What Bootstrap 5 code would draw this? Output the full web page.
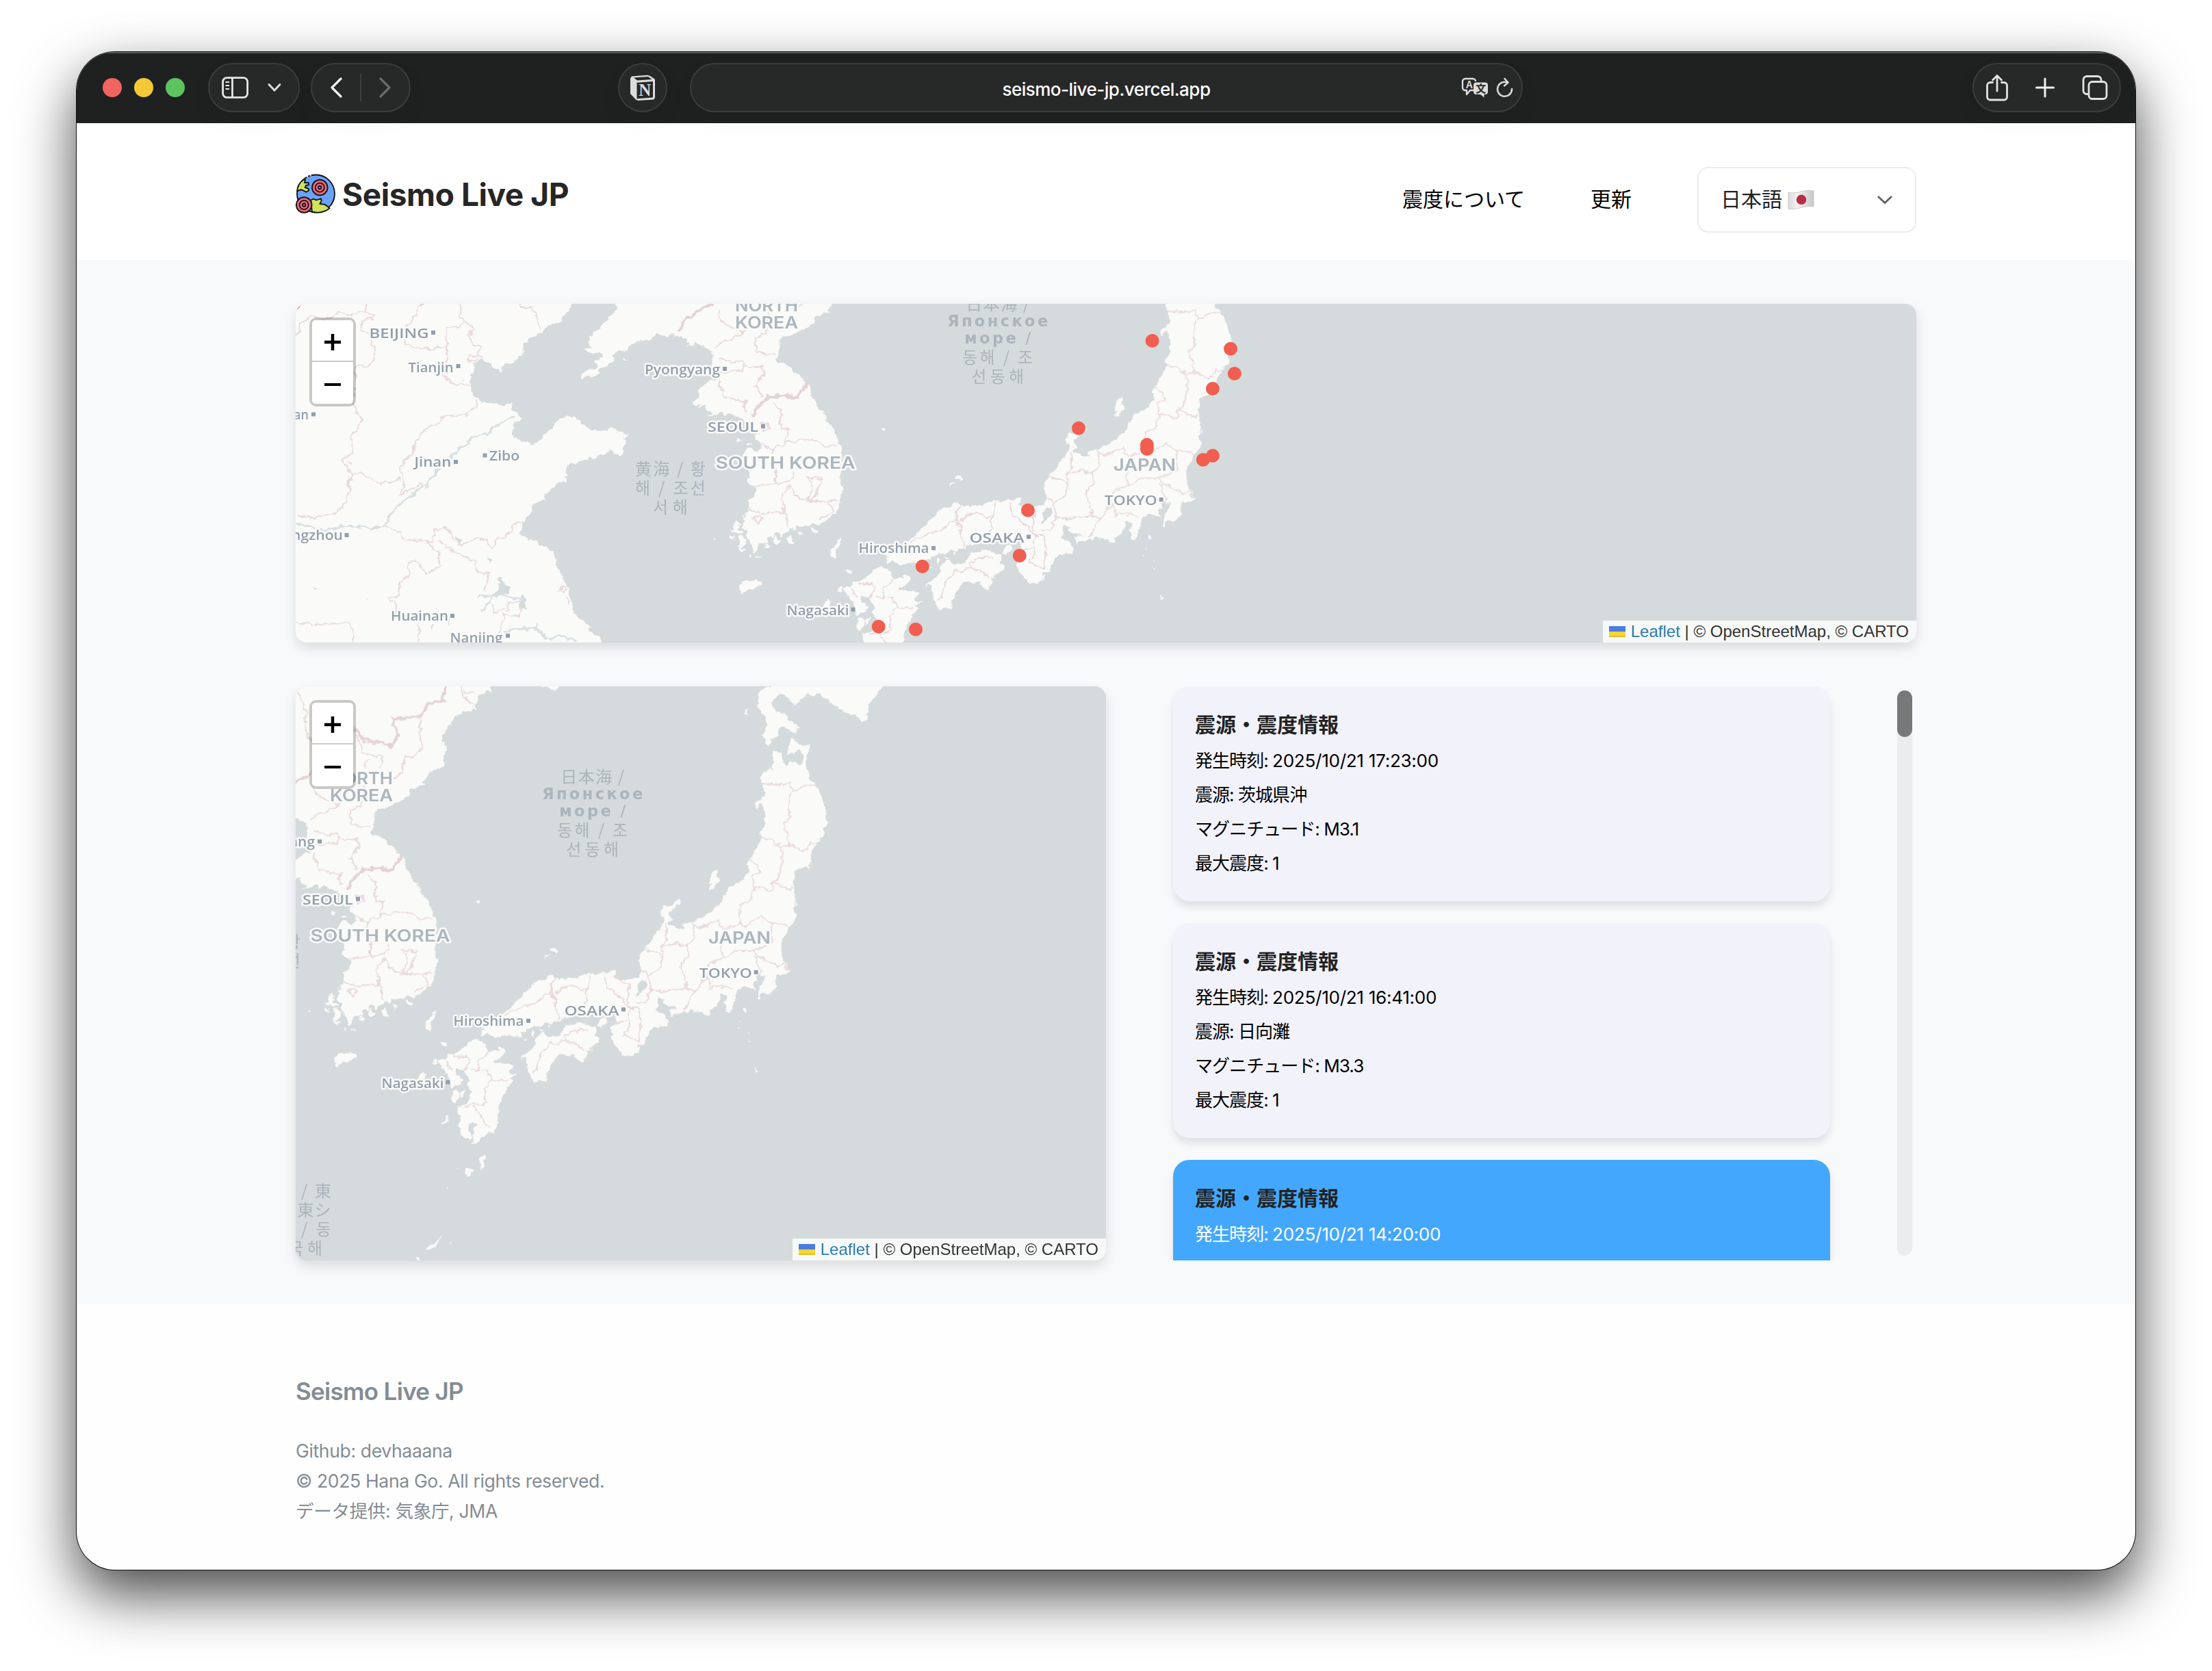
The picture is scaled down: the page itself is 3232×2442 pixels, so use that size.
<!DOCTYPE html>
<html lang="ja">
<head>
<meta charset="utf-8">
<meta name="viewport" content="width=device-width, initial-scale=1">
<title>Seismo Live JP</title>
<link href="https://cdn.jsdelivr.net/npm/bootstrap@5.3.0/dist/css/bootstrap.min.css" rel="stylesheet">
<style>
  body { background:#fff; font-family:Inter,"Noto Sans CJK JP",sans-serif; color:#000; width:3232px; height:2442px; overflow:hidden; padding:76px 112px 0; }
  .win { width:3008px; height:2218px; border-radius:56px; background:#fefefe; box-shadow:0 0 0 1px #111, 0 36px 84px rgba(0,0,0,.72); }
  .win-in { border-radius:56px; overflow:hidden; height:100%; }
  .toolbar { height:104px; background:#1f2120; padding:0 21px 0 38px; box-shadow:inset 0 2px 0 #5b5d5c; z-index:1; flex:none; }
  .lights { gap:18px; }
  .light { width:28px; height:28px; border-radius:50%; }
  .light.r { background:#f0655f; } .light.y { background:#f5c837; } .light.g { background:#5cc360; }
  .pill { height:72px; border-radius:36px; background:#272828; border:2px solid #3b3d3c; box-shadow:0 14px 40px rgba(0,0,0,.035); flex:none; }
  .pill svg, .flag svg, .brand svg { display:block; flex:none; }
  .pill-side { width:134px; margin-left:34px; padding-left:17px; }
  .pill-nav { width:146px; margin-left:16px; padding:0 26px; }
  .pill-ext { width:72px; margin-left:303px; }
  .pill-end { width:217px; padding:0 17px; }
  .addr { width:1217px; margin-left:33px; color:#fff; font-size:26px; font-weight:500; letter-spacing:-.52px; }
  .addr-icons { right:11px; gap:11px; }
  .wrapx { padding-left:320px; padding-right:320px; }
  .site-head { height:200px; background:#fff; }
  .brand { font-size:46px; font-weight:700; color:#262626; letter-spacing:-.42px; line-height:1; gap:9px; margin-bottom:-7px; }
  .menu { font-size:30px; line-height:1; gap:96px; margin-top:24px; }
  .menu > span, .lang > span:first-child { margin-top:-2px; }
  .lang { width:320px; height:96px; border:2px solid #e9ecef; border-radius:16px; padding:0 32px 0 32px; color:#222; }
  .main-area { background:#f8f9fb; height:1526px; padding-top:64px; }
  .mapbox { border-radius:16px; box-shadow:0 8px 18px rgba(0,0,0,.12); background:#d5dadc; }
  .mapbox > svg { display:block; border-radius:16px; }
  .map-wide { height:495px; margin-bottom:64px; }
  .map-half { width:1184px; height:839px; }
  .zoomer { position:absolute; left:20px; top:20px; width:68px; height:130px; border:4px solid rgba(0,0,0,.2); border-radius:10px; background-clip:padding-box; }
  .zoomer div { height:61px; background:#fff; padding-top:5px; }
  .zoomer div:first-child { border-bottom:2px solid #ccc; border-radius:5px 5px 0 0; }
  .zoomer div:last-child { border-radius:0 0 5px 5px; }
  .attrib { position:absolute; right:0; bottom:0; height:32px; padding:0 11px 0 9px; background:#f7f9f8; border-bottom-right-radius:16px; font-family:"Liberation Sans",sans-serif; font-size:24px; line-height:32px; color:#333; white-space:nowrap; }
  .attrib .lf { color:#2a7cb0; }
  .feed { width:1184px; height:839px; overflow:hidden; padding-left:98px; }
  .feed-list { gap:32px; }
  .quake { width:960px; height:314px; border-radius:24px; background:#f2f2fb; padding:31px 32px; box-shadow:0 8px 12px rgba(0,0,0,.1); flex:none; }
  .quake h2 { font-size:30px; font-weight:700; line-height:50px; margin:0 0 3px; color:#222; }
  .quake p { font-size:26px; line-height:50px; margin:0; letter-spacing:-.95px; }
  .quake time { letter-spacing:-.25px; }
  .quake.sel { background:#43a8fd; color:#fff; }
  .track { width:22px; height:826px; margin:6px 0 0 98px; border-radius:11px; background:#ebecee; }
  .thumb { height:68px; border-radius:11px; background:#767978; }
  .foot { color:#848c93; padding-top:105px; font-size:26.6px; line-height:44px; }
  .foot h3 { font-size:35px; font-weight:600; line-height:44px; margin:0 0 43px; letter-spacing:-.7px; }
  .foot p { margin:0; letter-spacing:-.38px; }
  .land { fill:#fafaf8; }
  .adm path { fill:none; stroke:#e8d9dc; stroke-width:2; vector-effect:non-scaling-stroke; }
  .adm .nat { stroke:#e5d3d7; stroke-width:4.5; }
  .riv path { fill:none; stroke:#d9e0e3; stroke-width:3; vector-effect:non-scaling-stroke; }
  .city { font:600 20.5px "Open Sans",Inter,sans-serif; fill:#929fac; stroke:#fafaf8; stroke-width:5px; stroke-linejoin:round; paint-order:stroke; }
  .ctry { font:600 24px Inter,sans-serif; fill:#abb6bd; stroke:#fafaf8; stroke-width:5px; stroke-linejoin:round; paint-order:stroke; }
  .sea { font-family:"DejaVu Sans","Noto Sans CJK KR",sans-serif; font-size:24px; fill:#abb5bb; text-anchor:middle; }
  .cj { font-family:"Noto Sans CJK KR","Noto Sans CJK JP",sans-serif; }
</style>
<script src="https://cdn.jsdelivr.net/npm/bootstrap@5.3.0/dist/js/bootstrap.bundle.min.js"></script>
</head>
<body>

<!-- shared base map, drawn once and shown in both panels -->
<svg width="0" height="0" class="position-absolute">
  <defs>
    <filter id="coast" filterUnits="userSpaceOnUse" x="400" y="290" width="2440" height="900" color-interpolation-filters="sRGB">
      <feTurbulence type="fractalNoise" baseFrequency=".09" numOctaves="3" seed="4" result="n"/>
      <feDisplacementMap in="SourceGraphic" in2="n" scale="11" xChannelSelector="R" yChannelSelector="G"/>
    </filter>
    <g id="basemap">
      <g filter="url(#coast)">
        <!-- China, Korea -->
        <g class="land" transform="translate(420 430) scale(.54847 .33801)">
          <path d="M-40,-20L765,-20 756,45 747,70 737,95 728,110 716,120 700,132 684,150 670,168 655,182 642,195 633,212 630,235 627,255 618,270 610,285 603,298 590,297 578,303 567,318 552,318 543,312 536,298 528,288 515,285 502,295 497,305 500,335 490,345 486,380 490,405 497,430 507,450 520,465 545,472 565,475 575,478 583,470 597,475 601,500 612,520 626,545 620,552 608,545 602,560 600,590 602,612 612,628 628,640 645,645 665,640 678,628 680,608 695,590 708,578 713,555 725,540 745,530 760,528 775,545 783,565 795,567 812,585 830,590 850,592 862,575 875,598 910,600 898,625 905,645 893,665 890,690 872,688 868,672 855,678 835,690 822,705 800,715 780,722 765,733 750,733 745,760 750,780 735,790 745,812 720,820 708,838 688,865 685,885 665,900 656,905 652,935 640,965 635,982 622,990 620,1040 635,1042 645,1060 665,1070 685,1090 708,1108 715,1150 722,1185 730,1215 740,1250 748,1280 755,1310 760,1350 762,1380 775,1395 790,1412 805,1435 803,1455 820,1470 835,1490 845,1560 -40,1560Z"/>
          <path d="M870,-20L872,41 878,60 865,90 850,115 835,140 815,165 810,200 800,210 805,230 790,235 795,250 810,255 840,258 845,268 830,275 822,290 830,310 820,325 800,330 783,345 785,368 800,355 825,345 832,335 825,325 850,310 862,295 870,280 865,265 885,250 900,240 915,225 935,205 955,195 975,180 985,175 1020,178 1045,180 1050,192 1065,190 1070,210 1080,225 1085,205 1100,225 1120,232 1130,245 1135,270 1135,300 1125,320 1150,335 1140,350 1145,372 1118,380 1105,400 1095,420 1097,445 1085,462 1078,475 1100,478 1095,490 1112,485 1115,500 1130,512 1120,520 1140,525 1160,515 1165,530 1180,520 1200,530 1215,545 1222,565 1240,590 1258,605 1245,620 1255,645 1262,665 1255,680 1235,665 1220,675 1212,700 1230,720 1225,760 1235,785 1228,800 1232,820 1250,840 1245,870 1228,895 1230,910 1225,930 1215,985 1212,1010 1230,1020 1225,1050 1235,1080 1240,1108 1255,1080 1275,1070 1280,1050 1295,1060 1300,1030 1320,1045 1335,1010 1350,1018 1370,1000 1390,1005 1395,985 1415,1000 1420,990 1450,965 1465,940 1472,900 1475,855 1482,825 1470,815 1470,775 1475,735 1472,655 1465,620 1450,580 1435,530 1410,480 1400,445 1390,410 1375,370 1355,345 1340,320 1315,290 1303,285 1312,255 1310,225 1315,185 1340,168 1370,150 1385,145 1405,115 1410,95 1440,75 1450,45 1448,-20Z"/>
          <path d="M1202,1275L1205,1255 1225,1240 1250,1233 1264,1240 1258,1262 1240,1280 1212,1288Z M1473,1048L1475,1080 1465,1110 1455,1147 1447,1130 1455,1085Z M1490,1187l10,5-2,16-8-5z M565,315l10,5-6,16-7-8z M890,275l22,10-18,6z M1190,985l18,10-5,25 15,15-18,10-10-22-12,2 10-20z M1205,1050l15,8 5,15-15,28-12-10 6-20z M1180,1035l14,12-8,14-8-12z M1240,1090l10,22-12,5z M1270,1075l18,10-10,18z M1300,1045l16,22-14,16-8-14z M1335,1045l16,22-10,10-8-10z M1360,1025l18,20-14,10z M1400,1005l14,26-6,12-8-16z M1205,1098l14,8-8,12z M1228,1130l10,4-6,10z M1253,1128l12,4-8,8z M1195,622l10,8-8,6z M1225,640l12,6-10,6z M1135,1048l7,8-6,6z"/>
        </g>
        <!-- northern mainland, western Japan, Kyushu, Shikoku -->
        <g class="land" transform="translate(1012 299.3) scale(.3954 .5549)">
          <path d="M-30,-40L755,-40 750,40 735,38 715,45 705,65 690,80 665,88 645,95 625,100 610,120 595,130 575,150 572,165 585,180 578,205 575,235 550,243 535,245 515,262 500,278 480,287 455,298 450,310 425,320 400,330 370,342 325,355 325,385 200,420 90,380 60,373 30,366 -30,300Z"/>
          <path d="M940,-10L1000,-10 1000,27 965,31 935,22Z"/>
          <path d="M712,945L710,930 730,915 770,895 805,880 825,868 850,850 885,830 905,810 915,800 945,795 970,787 990,790 1000,795 1030,797 1070,792 1110,782 1130,778 1160,782 1180,778 1200,770 1218,775 1210,790 1225,795 1240,790 1265,795 1285,790 1300,785 1310,770 1310,755 1297,745 1300,735 1325,710 1350,690 1375,665 1390,645 1600,700 1600,850 1568,874 1530,878 1490,878 1445,885 1440,875 1465,870 1430,868 1410,865 1395,850 1390,840 1370,845 1360,865 1365,880 1385,890 1405,900 1400,918 1375,920 1350,925 1340,940 1325,950 1320,965 1300,970 1290,985 1275,997 1255,992 1230,988 1215,975 1195,950 1205,940 1195,920 1205,910 1230,905 1240,890 1235,880 1200,885 1180,893 1150,892 1120,890 1100,888 1060,890 1030,895 1000,905 960,912 930,918 905,922 880,935 860,930 865,950 845,945 800,942 770,950 740,938 720,945Z"/>
          <path d="M1160,905L1180,895 1182,910 1165,920 1145,918Z"/>
          <path d="M1025,930L1035,912 1060,915 1080,908 1110,912 1125,922 1142,925 1140,945 1152,962 1130,975 1110,985 1098,1000 1090,1018 1075,1005 1050,995 1020,992 1000,1002 980,1012 970,1030 955,1045 955,1068 935,1062 915,1065 905,1055 895,1045 885,1025 885,1010 890,1000 870,1000 845,1008 865,998 885,992 900,980 915,968 920,950 945,935 960,945 985,948 1010,940Z"/>
          <path d="M715,955L705,948 680,958 665,960 650,968 635,985 620,992 600,990 595,1000 575,1005 560,1010 570,1025 585,1030 580,1040 600,1050 610,1055 630,1060 640,1050 625,1040 630,1030 655,1038 665,1050 675,1060 665,1075 680,1090 670,1105 655,1125 630,1130 635,1150 640,1165 632,1190 635,1200 650,1205 665,1212 675,1218 680,1210 668,1190 670,1175 690,1165 702,1175 695,1190 680,1205 690,1218 685,1232 705,1225 715,1215 735,1205 740,1195 765,1200 770,1185 778,1155 785,1125 800,1100 810,1080 825,1070 835,1060 820,1055 845,1047 825,1040 835,1020 815,1018 790,1015 765,1012 765,1005 790,1003 805,995 805,980 790,975 775,985 755,985 740,980 730,970 722,960Z"/>
          <path d="M600,1050L630,1052 648,1060 645,1075 630,1080 615,1075 605,1085Z M610,1092l22-2 2,12-14,20-14-5z M635,1094l22-6-4,12-14,6z M548,1005l10,6-14,14-8-6z M500,1038l12,8-16,20-8-10z M571,962l10,0 2,9-12,1z M730,1253l4,14-12,26-14,8 6-24z M652,1296l14-8 20,8-4,10-14,6-14-6z M626,1286l12,4-4,3z M590,1343l8,3-4,3z M570,1172l14-12 14-8-6,12-20,12z M576,1474l-22,14-24,20-18-2 10-12z M600,1488l12-3-6,8z M480,1528l8,0 4,14-14,0z M702,588l10-3 2,9-8,2z M978,712l14-3 6,10-12,9-10-6z M950,736l16-3-2,5-14,4z M870,955l22,0-10,6z M905,932l14,4-10,6z M935,922l14,8-14,4z M958,914l14,2-10,8z M78,876l6,2-4,4z"/>
        </g>
        <!-- eastern Honshu, Hokkaido -->
        <g class="land" transform="translate(1492 299.3) scale(.47194 .5549)">
          <path d="M0,795L20,795 40,795 70,785 80,768 70,760 68,745 85,720 110,695 130,675 145,655 148,640 137,625 145,605 165,600 200,588 200,598 185,605 175,615 165,620 172,635 165,645 175,660 195,667 208,662 212,648 245,640 280,625 305,612 325,590 335,572 350,555 375,542 395,530 403,520 408,495 415,475 435,455 445,430 448,405 460,385 462,350 455,335 435,342 428,330 445,325 458,310 458,290 445,262 465,245 480,243 488,225 485,192 500,200 515,198 520,220 525,235 538,232 542,220 560,225 568,232 578,222 580,205 570,192 550,198 530,203 535,180 545,162 560,170 580,180 598,175 592,205 592,240 600,265 618,278 630,300 640,320 648,345 655,378 645,395 640,420 620,435 615,450 600,470 605,490 603,508 590,500 570,500 555,515 548,540 553,560 557,600 552,645 535,655 528,675 515,695 512,720 520,745 540,772 520,780 500,790 495,820 475,832 450,838 445,852 435,850 445,835 445,815 455,800 465,785 450,780 435,785 440,800 425,810 430,828 415,815 390,815 375,822 370,845 360,870 350,885 340,880 338,860 345,840 335,832 315,835 300,850 295,870 285,885 250,880 215,878 170,887 165,878 195,870 160,870 150,855 155,845 135,845 122,875 145,890 158,905 155,918 130,920 100,930 95,945 80,955 70,970 65,985 50,998 20,990 0,975Z"/>
          <path d="M485,-30L855,-30 823,25 800,50 780,78 777,105 768,116 755,105 715,92 680,75 650,55 625,42 600,45 570,62 552,75 540,60 525,48 505,45 487,58 485,75 495,92 520,97 540,115 570,130 555,142 530,135 515,130 500,140 498,155 480,165 475,175 460,170 457,150 470,125 465,105 450,88 435,75 442,50 445,35 475,25Z"/>
          <path d="M314,503L310,525 320,533 300,558 285,555 300,542 285,540 292,520Z M400,90l13-6-8,20z M394,868l8-2 3,10-8,2z M386,906l4-3 0,8z M372,921l5,1-3,4z M408,934l5,2-2,5z M415,955l5,2-4,3z M432,1028l12,5-5,6z"/>
        </g>
        <!-- lakes -->
        <g fill="#d5dadc">
          <path transform="translate(1012 299.3) scale(.3954 .5549)" d="M1322,797L1330,810 1322,820 1300,830 1285,845 1290,828 1300,815 1305,802Z"/>
          <path transform="translate(420 430) scale(.54847 .33801)" d="M563,1220l8,2 4,30 18,20-4,24-28,14-16-6 14-24 6-20z M450,1042l16,24-10,24-8-20z M534,1142l10,4-4,14-8-6z M622,1300l14,20 0,44-14-10z M370,820l6,20-8,8z M206,1310l7,6-2,14z M384,1430l6,0-4,22z M64,1262l12,14-4,4z M430,1390l4,26-6,18z M464,368l10,4-6,6z"/>
        </g>
        <g class="riv" transform="translate(420 430) scale(.54847 .33801)">
          <path d="M0,975L22,990 100,1025 145,1000 200,1010 255,1010 270,960 300,905 370,820 410,740 450,680 490,625 540,600 560,560 605,528 M575,1465L600,1450 660,1445 690,1490 740,1475 770,1505 M660,1430L680,1470 M505,1310L560,1300 630,1320 M520,1370L545,1310"/>
        </g>
        <g class="adm" transform="translate(420 430) scale(.54847 .33801)">
          <path d="M22,185L35,130 60,100 110,105 140,80 180,90 210,70 215,35 M190,75L232,90 228,105 195,115 195,150 215,165 220,200 235,230 230,290 200,315 180,310 175,480 200,545 175,610 170,690 147,720 168,775 160,900 130,945 60,965 25,955 M168,775L200,780 250,820 300,800 M505,455L500,480 475,520 420,522 380,575 350,615 330,690 300,750 312,820 300,870 360,820"/>
          <path d="M365,35L345,65 335,110 315,150 315,220 390,240 425,215 420,150 455,140 470,110 500,150 485,180 495,225 515,225 510,260 525,290 M460,35L460,100 470,110 M425,215L425,290 415,340 440,390 485,395 M620,35L625,60 650,55 665,110 675,150 M480,260L510,265 500,290 480,285Z"/>
          <path d="M262,1000L300,1025 310,1060 385,1070 395,1015 425,1010 440,1060 470,1085 505,1055 530,1060 545,1100 560,1060 590,1040 600,990 635,980 M370,1070L405,1120 405,1175 370,1210 345,1155 320,1160 325,1220 300,1240 295,1300 268,1310 290,1340 290,1380 M400,1060L440,1110 500,1160 505,1200 535,1205 525,1290 M545,1340L550,1370 585,1365 590,1330 620,1330 620,1390 575,1390 570,1440 560,1465 M22,1415L60,1430 170,1420 175,1520 M350,1390L350,1520 M730,1260l10,10-4,20-8-8z M744,1320l5,8-3,8z M166,725l5,5-2,10z"/>
          <path d="M1150,60L1155,120 1215,165 1160,205 1140,230 M1285,41L1275,170 1245,185 1250,245 1300,260 M1150,280L1200,290 1240,320 1270,310 1265,350 1245,400 1265,440 M1150,340L1210,330 1215,300 M1150,370L1165,450 1220,465 1220,510 M1290,470L1315,500 1315,570 1335,590 1330,640 1290,670 M1330,640L1370,625 1400,630 1425,655 1465,655 M1260,650L1290,670 1300,740 1300,820 1240,830 M1300,820L1340,810 1350,770 M1385,790L1425,800 1410,860 1395,890 1385,885 1400,840Z M1318,860L1340,830 1365,890 1440,900 1455,940 1410,975 M1318,860L1320,940 1335,1005 M1225,935L1260,940 1320,945 M1240,970L1255,955 1270,970 1255,990Z M1262,560L1278,555 1282,580 1265,590Z M1440,895L1468,890"/>
          <path class="nat" d="M1040,165L1055,120 1090,75 1130,41 M1235,530L1250,495 1280,440 1360,440 1380,410 1380,380"/>
        </g>
        <g class="adm" transform="translate(1012 299.3) scale(.3954 .5549)">
          <path d="M40,40L70,90 70,140 90,180 M635,20L650,50 690,75 M650,40L690,40 M490,110L495,180 480,205 435,210 420,250 390,270 M250,150L280,200 350,210 345,240 M300,215L290,240"/>
          <path class="nat" d="M585,10L575,65 520,70 485,105 385,110 412,150 390,178 340,172 280,165 250,135 M30,275L90,252"/>
          <path d="M800,890L855,870 880,862 920,858 950,835 975,835 985,790 M975,835L990,850 985,860 1005,900 M985,835L1020,815 1060,812 1095,825 1110,820 1115,785 M1110,820L1095,865 1100,888 M1170,785L1180,815 1215,830 1240,850 1265,880 1260,930 1245,945 1300,955 1305,900 1290,870 1250,870 M1215,785L1235,800 1260,815 1260,860 M1310,770L1330,785 1345,820 1320,855 1290,858 M1330,785L1385,762 1385,735 1325,715 M1385,762L1390,710 1405,650 M1395,710L1430,700 1480,705 1475,740 1455,760 1480,820 1385,825 1345,820 M1480,820L1505,825 1470,875 M1195,912L1250,905"/>
          <path d="M910,1045L935,1000 965,965 1030,958 1030,945 1060,930 1110,928 M1030,958L1070,965 1100,985 M610,998L665,1000 670,1015 650,1035 M745,985L710,1010 705,1035 680,1030 M580,1010L610,1035 M715,1030L740,1035 755,1062 815,1062 M755,1062L730,1080 735,1120 655,1130 M690,1130L720,1165 745,1190"/>
        </g>
        <g class="adm" transform="translate(1492 299.3) scale(.47194 .5549)">
          <path d="M452,280L500,282 540,275 550,300 540,310 535,360 522,390 535,440 515,445 445,420 M550,300L618,280 M535,440L580,458 595,455 600,435 620,435 M515,445L515,480 500,530 485,535 485,560 430,555 425,520 445,510 430,488 415,480 M485,540L540,560 545,548 M430,560L415,590 380,600 385,650 330,665 315,640 265,660 240,655 235,645 M385,650L400,655 450,625 480,650 480,700 425,722 445,735 500,760 520,752 535,770 M480,650L535,655 M425,722L370,718 330,740 325,700 M330,740L300,750 280,770 290,820 340,810 365,825 M240,655L240,690 220,705 M435,735L445,780 M225,820L250,825 290,780"/>
        </g>
      </g>
      <g class="city">
        <text x="539.6" y="494" textLength="87" lengthAdjust="spacingAndGlyphs">BEIJING</text>
        <text x="596.6" y="544" textLength="66" lengthAdjust="spacingAndGlyphs">Tianjin</text>
        <text x="942" y="546.5" textLength="110" lengthAdjust="spacingAndGlyphs">Pyongyang</text>
        <text x="1034" y="631" textLength="74" lengthAdjust="spacingAndGlyphs">SEOUL</text>
        <text x="605.4" y="682" textLength="54" lengthAdjust="spacingAndGlyphs">Jinan</text>
        <text x="715" y="673" textLength="44" lengthAdjust="spacingAndGlyphs">Zibo</text>
        <text x="429" y="613" textLength="22" lengthAdjust="spacingAndGlyphs">an</text>
        <text x="426" y="789" textLength="75" lengthAdjust="spacingAndGlyphs">ngzhou</text>
        <text x="571" y="907" textLength="84" lengthAdjust="spacingAndGlyphs">Huainan</text>
        <text x="657.5" y="938.5" textLength="77" lengthAdjust="spacingAndGlyphs">Nanjing</text>
        <text x="1613.8" y="738" textLength="77" lengthAdjust="spacingAndGlyphs">TOKYO</text>
        <text x="1416.5" y="793" textLength="80" lengthAdjust="spacingAndGlyphs">OSAKA</text>
        <text x="1254.5" y="808" textLength="103" lengthAdjust="spacingAndGlyphs">Hiroshima</text>
        <text x="1149.5" y="899" textLength="91" lengthAdjust="spacingAndGlyphs">Nagasaki</text>
      </g>
      <path fill="#929fac" d="M630,483h6v6h-6z M666.500,532h6v6h-6z M1056,536h6v6h-6z M1112,620h6v6h-6z M663,672h6v6h-6z M705.500,662.600h6v6h-6z M455,602.400h6v6h-6z M503.600,779h6v6h-6z M658,897h6v6h-6z M739,926h6v6h-6z M1693.700,727h6v6h-6z M1500,781.600h6v6h-6z M1361,798h6v6h-6z M1243.500,887.700h6v6h-6z"/>
      <g class="ctry">
        <text x="1045.500" y="685" textLength="204" lengthAdjust="spacingAndGlyphs">SOUTH KOREA</text>
        <text x="1074" y="455" textLength="92" lengthAdjust="spacingAndGlyphs">NORTH</text>
        <text x="1074" y="480" textLength="92" lengthAdjust="spacingAndGlyphs">KOREA</text>
        <text x="1627" y="688" textLength="91" lengthAdjust="spacingAndGlyphs">JAPAN</text>
      </g>
      <g class="sea">
        <g class="cj">
          <text x="979.400" y="694" textLength="103">黄海 / 황</text>
          <text x="979.400" y="722" textLength="103">해 / 조선</text>
          <text x="979.400" y="750" textLength="51">서해</text>
          <text x="1457.700" y="453" textLength="93">日本海 /</text>
          <text x="1457.700" y="531" textLength="103">동해 / 조</text>
          <text x="1457.700" y="559" textLength="77">선동해</text>
          <text x="1054" y="1058" textLength="44">/ 東</text>
          <text x="1051" y="1086" textLength="49">東シ</text>
          <text x="1054" y="1114" textLength="44">/ 동</text>
          <text x="1038" y="1142" textLength="50">국해</text>
        </g>
        <text x="1457.700" y="477" textLength="147" font-weight="700" font-size="22.500">Японское</text>
        <text x="1457.700" y="502" textLength="97" font-size="22.500"><tspan font-weight="700">море</tspan> /</text>
      </g>
    </g>
  </defs>
</svg>

<div class="win">
<div class="win-in d-flex flex-column">

  <!-- browser toolbar -->
  <div class="toolbar d-flex align-items-center position-relative">
    <div class="lights d-flex">
      <span class="light r"></span>
      <span class="light y"></span>
      <span class="light g"></span>
    </div>
    <div class="pill pill-side d-flex align-items-center">
      <svg width="40" height="32" viewBox="0 0 40 32" fill="none" stroke="#e6e6e6" stroke-width="2.8"><rect x="2.600" y="1.600" width="36" height="28.800" rx="6"/><path d="M16.500 2v28"/><path d="M6.500 8h5.500M6.500 13h5.500M6.500 18h5.500" stroke-width="2.200"/></svg>
      <svg class="ms-auto me-4" width="22" height="14" viewBox="0 0 22 14" fill="none" stroke="#dcdcdc" stroke-width="3" stroke-linecap="round" stroke-linejoin="round"><path d="M3 2.500l8 8.500 8-8.500"/></svg>
    </div>
    <div class="pill pill-nav d-flex align-items-center">
      <svg width="20" height="30" viewBox="0 0 20 30" fill="none" stroke="#f2f2f2" stroke-width="3.200" stroke-linecap="round" stroke-linejoin="round"><path d="M16 2L3 15l13 13"/></svg>
      <svg class="mx-auto" width="2" height="40"><path d="M1 0v40" stroke="#3d3f3e" stroke-width="2"/></svg>
      <svg width="20" height="30" viewBox="0 0 20 30" fill="none" stroke="#6a6b6b" stroke-width="3.200" stroke-linecap="round" stroke-linejoin="round"><path d="M4 2l13 13L4 28"/></svg>
    </div>
    <div class="pill pill-ext d-flex align-items-center justify-content-center">
      <svg width="38" height="38" viewBox="0 0 38 38"><path d="M1 5.500L3 2.500 26 .8 30 2l7 5v27l-2 2.500L12 38l-3-1.500L1 28z" fill="#dcdcdc"/><path d="M6 4.600L27 3l5.500 4L11 8.400z" fill="#272828"/><path d="M10.500 11.800L34 10v23.600l-23.500 1.600z" fill="#272828"/><text x="22.300" y="31" font-family="Liberation Serif,serif" font-weight="700" font-size="25" text-anchor="middle" fill="#dcdcdc">N</text></svg>
    </div>
    <div class="pill addr d-flex align-items-center position-relative">
      <span class="w-100 text-center pt-1">seismo-live-jp.vercel.app</span>
      <div class="addr-icons position-absolute d-flex align-items-center">
        <svg width="40" height="30" viewBox="0 0 40 30"><path d="M19 19h-6l-5 6v-6H6a4 4 0 0 1-4-4V6a4 4 0 0 1 4-4h11a4 4 0 0 1 4 4" fill="none" stroke="#dcdcdc" stroke-width="2.400" stroke-linejoin="round"/><text x="11.500" y="16" font-family="Inter,sans-serif" font-size="14" font-weight="600" text-anchor="middle" fill="#dcdcdc">A</text><path d="M22 7.500h13a4 4 0 0 1 4 4V21a4 4 0 0 1-4 4h-1.500v4.500L28 25h-6a4 4 0 0 1-4-4v-9.500a4 4 0 0 1 4-4z" fill="#dcdcdc"/><text x="28.500" y="21.500" font-family="Noto Sans CJK JP,sans-serif" font-size="15" font-weight="700" text-anchor="middle" fill="#272828">文</text></svg>
        <svg width="26" height="30" viewBox="0 0 26 30" fill="none" stroke="#dcdcdc" stroke-width="2.500" stroke-linecap="round" stroke-linejoin="round"><path d="M23 17A10.500 10.500 0 1 1 16 7.400"/><path d="M12.500 2l5 5.600-5.500 4.600"/></svg>
      </div>
    </div>
    <div class="pill pill-end d-flex align-items-center justify-content-between ms-auto">
      <svg width="34" height="40" viewBox="0 0 34 40" fill="none" stroke="#e2e2e2" stroke-width="2.800" stroke-linecap="round" stroke-linejoin="round"><path d="M10.500 12.500H7A4.500 4.500 0 0 0 2.500 17v16.500A4.500 4.500 0 0 0 7 38h20a4.500 4.500 0 0 0 4.500-4.500V17a4.500 4.500 0 0 0-4.500-4.500h-3.500"/><path d="M17 25V2.500M10.500 9L17 2.500 23.500 9"/></svg>
      <svg width="30" height="30" viewBox="0 0 30 30" stroke="#f0f0f0" stroke-width="3" stroke-linecap="round"><path d="M14 2v26M1.500 15h25"/></svg>
      <svg width="38" height="36" viewBox="0 0 38 36" fill="none" stroke="#e2e2e2" stroke-width="2.800" stroke-linejoin="round"><rect x="10" y="9.500" width="26" height="25" rx="5"/><path d="M10 27.500H7A5 5 0 0 1 2 22.500V6.500a5 5 0 0 1 5-5h16a5 5 0 0 1 5 5v3"/></svg>
    </div>
  </div>

  <!-- site header -->
  <header class="site-head wrapx d-flex align-items-center flex-shrink-0">
    <div class="brand d-flex align-items-center">
      <svg width="59" height="60" viewBox="0 0 59 60" stroke="#151515" stroke-width="1.900" stroke-linejoin="round">
        <circle cx="29.500" cy="29" r="27.500" fill="#69a3fc"/>
        <path d="M11.500 8.500l2.500 0-1 4.500 5.700 0 .6 3-4.300 1-1.300 3 5 1.700.6 2.600-4 2.400-5-2.700-3.300-.7-4.700 2C2.500 18 6 12.500 11.500 8.500z" fill="#cfe35f"/>
        <path d="M24 55.500l-2-17 4-1.800 4 1.600 7-2 .7 3.300-2.400 4.400 6.700.6 5 3.300 2.500 2.500C43 56 33 58 24 55.500z" fill="#cfe35f"/>
        <g fill="#ef6a7e"><circle cx="35.300" cy="20" r="11.300"/><circle cx="35.300" cy="20" r="6.600"/><circle cx="35.300" cy="20" r="2.200"/></g>
        <g fill="#ef6a7e"><circle cx="12.200" cy="45.500" r="11.300"/><circle cx="12.200" cy="45.500" r="6.600"/><circle cx="12.200" cy="45.500" r="2.200"/></g>
        <path d="M16 4.500l2-1M21 2.500l1.500-.4" stroke="#fff" stroke-width="2.500"/>
      </svg>
      <span>Seismo Live JP</span>
    </div>
    <nav class="menu d-flex align-items-center ms-auto">
      <span>震度について</span>
      <span>更新</span>
      <div class="lang d-flex align-items-center">
        <span>日本語</span>
        <span class="flag ms-2"><svg width="40" height="30" viewBox="0 0 40 30"><defs><linearGradient id="fl"><stop offset="0" stop-color="#d9d9d9"/><stop offset=".35" stop-color="#f4f4f4"/><stop offset=".7" stop-color="#dcdcdc"/><stop offset="1" stop-color="#c6c6c6"/></linearGradient></defs><path d="M1 4c12 4 22-5 37-2v23c-13-3-25 6-37 3z" fill="url(#fl)" stroke="#c9c9c9"/><circle cx="20" cy="14.800" r="7.200" fill="#b92c48"/></svg></span>
        <svg class="ms-auto" width="24" height="14" viewBox="0 0 24 14" fill="none" stroke="#666" stroke-width="3"><path d="M2 2l10 9.500L22 2"/></svg>
      </div>
    </nav>
  </header>

  <main class="main-area wrapx flex-shrink-0">
    <div class="mapbox map-wide position-relative">
      <svg width="2368" height="495" viewBox="432 444 2368 495">
        <use href="#basemap"/>
        <g fill="#f15e50">
          <circle cx="1683.600" cy="498" r="10"/><circle cx="1798" cy="509.800" r="10"/><circle cx="1803.800" cy="546" r="10"/><circle cx="1771.900" cy="568" r="10"/><circle cx="1576" cy="625.700" r="10"/><circle cx="1675.900" cy="650" r="10"/><circle cx="1675.900" cy="656" r="10"/><circle cx="1757.800" cy="672" r="10"/><circle cx="1771.900" cy="666" r="10"/><circle cx="1501.900" cy="745.700" r="10"/><circle cx="1489.700" cy="812" r="10"/><circle cx="1347.700" cy="827.800" r="10"/><circle cx="1283.700" cy="915.700" r="10"/><circle cx="1338" cy="919.800" r="10"/><circle cx="430" cy="443" r="10"/>
        </g>
      </svg>
      <div class="zoomer">
        <div class="d-flex align-items-center justify-content-center"><svg width="28" height="28"><path d="M14 2v24M2 14h24" stroke="#000" stroke-width="4.500"/></svg></div>
        <div class="d-flex align-items-center justify-content-center"><svg width="28" height="28"><path d="M2 14h24" stroke="#000" stroke-width="4"/></svg></div>
      </div>
      <div class="attrib d-flex align-items-center"><svg width="24" height="16" class="me-2"><path fill="#4c7be1" d="M0 0h24v8H0z"/><path fill="#ffd430" d="M0 8h24v6H0z"/><path fill="#e0bc2e" d="M0 14h24v2H0z"/></svg><span class="lf">Leaflet</span>&nbsp;| © OpenStreetMap, © CARTO</div>
    </div>

    <div class="d-flex">
      <div class="mapbox map-half position-relative flex-shrink-0">
        <svg width="1184" height="839" viewBox="1024 312.300 1184 839"><use href="#basemap"/></svg>
        <div class="zoomer">
          <div class="d-flex align-items-center justify-content-center"><svg width="28" height="28"><path d="M14 2v24M2 14h24" stroke="#000" stroke-width="4.500"/></svg></div>
          <div class="d-flex align-items-center justify-content-center"><svg width="28" height="28"><path d="M2 14h24" stroke="#000" stroke-width="4"/></svg></div>
        </div>
        <div class="attrib d-flex align-items-center"><svg width="24" height="16" class="me-2"><path fill="#4c7be1" d="M0 0h24v8H0z"/><path fill="#ffd430" d="M0 8h24v6H0z"/><path fill="#e0bc2e" d="M0 14h24v2H0z"/></svg><span class="lf">Leaflet</span>&nbsp;| © OpenStreetMap, © CARTO</div>
      </div>

      <div class="feed d-flex align-items-start">
        <div class="feed-list d-flex flex-column">
          <article class="quake">
            <h2>震源・震度情報</h2>
            <p>発生時刻: <time>2025/10/21 17:23:00</time></p>
            <p>震源: 茨城県沖</p>
            <p>マグニチュード: M3.1</p>
            <p>最大震度: 1</p>
          </article>
          <article class="quake">
            <h2>震源・震度情報</h2>
            <p>発生時刻: <time>2025/10/21 16:41:00</time></p>
            <p>震源: 日向灘</p>
            <p>マグニチュード: M3.3</p>
            <p>最大震度: 1</p>
          </article>
          <article class="quake sel">
            <h2>震源・震度情報</h2>
            <p>発生時刻: <time>2025/10/21 14:20:00</time></p>
          </article>
        </div>
        <div class="track flex-shrink-0"><div class="thumb"></div></div>
      </div>
    </div>
  </main>

  <footer class="foot wrapx">
    <h3>Seismo Live JP</h3>
    <p>Github: devhaaana</p>
    <p>© 2025 Hana Go. All rights reserved.</p>
    <p>データ提供: 気象庁, JMA</p>
  </footer>
</div>
</div>
</body>
</html>
